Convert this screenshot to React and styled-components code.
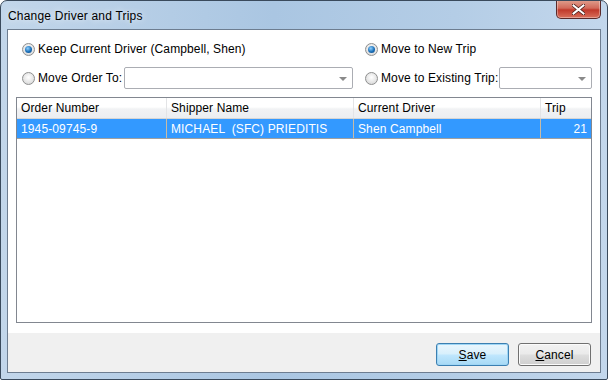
import styled, { createGlobalStyle } from "styled-components";

const GlobalStyle = createGlobalStyle`
  html, body {
    margin: 0;
    padding: 0;
    background: #ffffff;
  }
  body {
    font-family: "Liberation Sans", Arial, sans-serif;
    font-size: 12px;
    letter-spacing: 0.12px;
  }
`;

const Window = styled.div`
  width: 608px;
  height: 380px;
  box-sizing: border-box;
  border: 1px solid #3a4a5c;
  border-radius: 7px 7px 2px 2px;
  background: linear-gradient(90deg, #c2d6ea 0%, #aac6e2 45%, #b4cde6 75%, #c3d7ec 100%);
  display: flex;
  flex-direction: column;
  overflow: hidden;
`;

const TitleBar = styled.div`
  height: 28px;
  display: flex;
  align-items: flex-start;
  justify-content: space-between;
  padding-left: 7px;
  padding-right: 6px;
`;

const Title = styled.div`
  font-family: "Liberation Sans", Arial, sans-serif;
  font-size: 12px;
  letter-spacing: 0.2px;
  color: #000;
  margin-top: 8px;
  text-shadow: 0 0 6px rgba(255, 255, 255, 0.9);
`;

const CloseButton = styled.div`
  width: 45px;
  height: 19px;
  margin-top: -1px;
  box-sizing: border-box;
  border: 1px solid #5a2a2a;
  border-top: none;
  border-radius: 0 0 5px 5px;
  background: linear-gradient(180deg, #e0a08f 0%, #d26a5a 45%, #c0392b 55%, #d9705c 100%);
  display: flex;
  align-items: center;
  justify-content: center;
  box-shadow: inset 0 0 0 1px rgba(255, 255, 255, 0.35);
`;

const Client = styled.div`
  flex: 1;
  margin: 0 6px 6px 6px;
  border: 1px solid #6d7d90;
  background: #ffffff;
  display: flex;
  flex-direction: column;
`;

const Options = styled.div`
  display: grid;
  grid-template-columns: 331px 1fr;
  grid-template-rows: 22px 22px;
  column-gap: 12px;
  row-gap: 7px;
  padding: 8px 8px 8px 14px;
`;

const OptionRow = styled.div`
  display: flex;
  align-items: center;
`;

const Radio = styled.span`
  width: 13px;
  height: 13px;
  box-sizing: border-box;
  border-radius: 50%;
  border: 1px solid #8e8f8f;
  background: radial-gradient(circle at 50% 40%, #ffffff 0%, #e6e6e6 55%, #cfcfcf 100%);
  display: flex;
  align-items: center;
  justify-content: center;
  margin-right: 3px;
  flex-shrink: 0;

  &::after {
    content: "";
    display: ${(p) => (p.checked ? "block" : "none")};
    width: 7px;
    height: 7px;
    border-radius: 50%;
    background: radial-gradient(circle at 40% 35%, #8fd0ff 0%, #1a6fb8 55%, #0b3f78 100%);
  }
`;

const Label = styled.span`
  color: #000;
  white-space: nowrap;
`;

const Combo = styled.div`
  height: 22px;
  width: ${(p) => p.width}px;
  box-sizing: border-box;
  border: 1px solid #abadb3;
  border-radius: 2px;
  background: #fff;
  margin-left: auto;
  display: flex;
  align-items: center;
  justify-content: flex-end;
  padding-right: 5px;
`;

const Arrow = styled.span`
  width: 0;
  height: 0;
  border-left: 4px solid transparent;
  border-right: 4px solid transparent;
  border-top: 4px solid #8a8a8a;
  margin-top: 2px;
`;

const ListView = styled.div`
  margin: 0 8px;
  height: 226px;
  box-sizing: border-box;
  border: 1px solid #828790;
  background: #fff;
`;

const Columns = "150px 187px 187px 1fr";

const HeaderRow = styled.div`
  display: grid;
  grid-template-columns: ${Columns};
  height: 21px;
  background: linear-gradient(180deg, #ffffff 0%, #ffffff 45%, #f1f2f4 55%, #eceef1 100%);
  border-bottom: 1px solid #d5d5d5;
  box-sizing: border-box;
`;

const HeaderCell = styled.div`
  padding-left: 4px;
  display: flex;
  align-items: center;
  border-right: 1px solid #e3e4e6;
  color: #000;
  &:last-child {
    border-right: none;
  }
`;

const DataRow = styled.div`
  display: grid;
  grid-template-columns: ${Columns};
  height: 20px;
  background: ${(p) => (p.selected ? "#3399ff" : "#fff")};
  color: ${(p) => (p.selected ? "#fff" : "#000")};
  border-bottom: 1px solid #a0a0a0;
  box-sizing: border-box;
`;

const Cell = styled.div`
  padding: 0 4px;
  display: flex;
  align-items: center;
  justify-content: ${(p) => (p.right ? "flex-end" : "flex-start")};
  border-right: 1px solid #c8bba5;
  white-space: pre;
  &:last-child {
    border-right: none;
  }
`;

const Spacer = styled.div`
  height: 10px;
`;

const Footer = styled.div`
  flex: 1;
  background: #f0f0f0;
  display: flex;
  justify-content: flex-end;
  align-items: flex-start;
  gap: 9px;
  padding: 10px 9px 0 0;
`;

const Button = styled.button`
  width: 73px;
  height: 23px;
  box-sizing: border-box;
  border-radius: 3px;
  border: 1px solid ${(p) => (p.primary ? "#3c7fb1" : "#707070")};
  background: ${(p) =>
    p.primary
      ? "linear-gradient(180deg, #eaf6fd 0%, #d9f0fc 45%, #bee6fd 55%, #a7d9f5 100%)"
      : "linear-gradient(180deg, #f2f2f2 0%, #ebebeb 45%, #dddddd 55%, #cfcfcf 100%)"};
  box-shadow: ${(p) => (p.primary ? "inset 0 0 0 1px #9fd6f5" : "inset 0 0 0 1px #fbfbfb")};
  font-family: "Liberation Sans", Arial, sans-serif;
  font-size: 12px;
  letter-spacing: 0.12px;
  color: #000;
  padding: 0;
  u {
    text-decoration: underline;
  }
`;

const App = () => {
  return (
    <>
      <GlobalStyle />
      <Window>
        <TitleBar>
          <Title>Change Driver and Trips</Title>
          <CloseButton>
            <svg width="13" height="11" viewBox="0 0 13 11">
              <path
                d="M1 1 L12 10 M12 1 L1 10"
                stroke="#4a1f1a"
                strokeWidth="3.4"
                strokeLinecap="square"
              />
              <path
                d="M1.5 1.5 L11.5 9.5 M11.5 1.5 L1.5 9.5"
                stroke="#ffffff"
                strokeWidth="2"
                strokeLinecap="square"
              />
            </svg>
          </CloseButton>
        </TitleBar>
        <Client>
          <Options>
            <OptionRow>
              <Radio checked />
              <Label>Keep Current Driver (Campbell, Shen)</Label>
            </OptionRow>
            <OptionRow>
              <Radio checked />
              <Label>Move to New Trip</Label>
            </OptionRow>
            <OptionRow>
              <Radio />
              <Label>Move Order To:</Label>
              <Combo width={229}>
                <Arrow />
              </Combo>
            </OptionRow>
            <OptionRow>
              <Radio />
              <Label>Move to Existing Trip:</Label>
              <Combo width={93}>
                <Arrow />
              </Combo>
            </OptionRow>
          </Options>
          <ListView>
            <HeaderRow>
              <HeaderCell>Order Number</HeaderCell>
              <HeaderCell>Shipper Name</HeaderCell>
              <HeaderCell>Current Driver</HeaderCell>
              <HeaderCell>Trip</HeaderCell>
            </HeaderRow>
            <DataRow selected>
              <Cell>1945-09745-9</Cell>
              <Cell>MICHAEL  (SFC) PRIEDITIS</Cell>
              <Cell>Shen Campbell</Cell>
              <Cell right>21</Cell>
            </DataRow>
          </ListView>
          <Spacer />
          <Footer>
            <Button primary>
              <u>S</u>ave
            </Button>
            <Button>
              <u>C</u>ancel
            </Button>
          </Footer>
        </Client>
      </Window>
    </>
  );
};

export default App;
